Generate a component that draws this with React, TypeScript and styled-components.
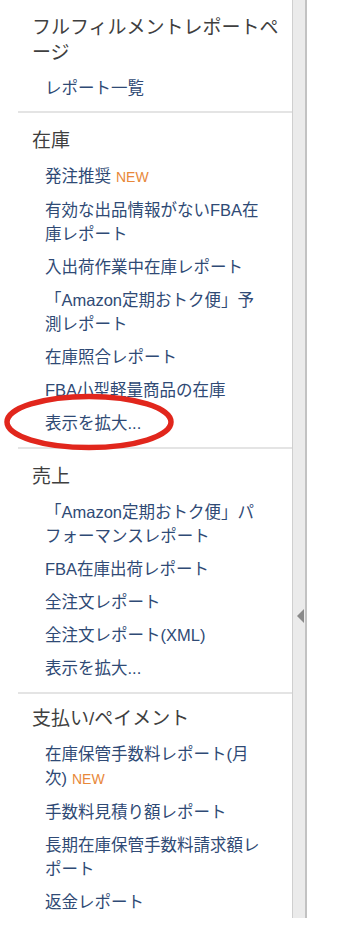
import styled, { createGlobalStyle } from "styled-components"

const GlobalStyle = createGlobalStyle`
  html, body {
    margin: 0;
    padding: 0;
    background: #fff;
  }
  body {
    font-family: "Liberation Sans", "Noto Sans CJK JP", sans-serif;
  }
`

type Link = { label: string, isNew?: boolean }
type Section = { title: string, links: Link[] }

const sections: Section[] = [
  { title: "フルフィルメントレポートページ", links: [{ label: "レポート一覧" }] },
  {
    title: "在庫",
    links: [
      { label: "発注推奨", isNew: true },
      { label: "有効な出品情報がないFBA在庫レポート" },
      { label: "入出荷作業中在庫レポート" },
      { label: "「Amazon定期おトク便」予測レポート" },
      { label: "在庫照合レポート" },
      { label: "FBA小型軽量商品の在庫" },
      { label: "表示を拡大..." },
    ],
  },
  {
    title: "売上",
    links: [
      { label: "「Amazon定期おトク便」パフォーマンスレポート" },
      { label: "FBA在庫出荷レポート" },
      { label: "全注文レポート" },
      { label: "全注文レポート(XML)" },
      { label: "表示を拡大..." },
    ],
  },
  {
    title: "支払い/ペイメント",
    links: [
      { label: "在庫保管手数料レポート(月次)", isNew: true },
      { label: "手数料見積り額レポート" },
      { label: "長期在庫保管手数料請求額レポート" },
      { label: "返金レポート" },
    ],
  },
]

const App = () => {
  return <Page>
    <GlobalStyle />
    <Sidebar>
      {sections.map(section => (
        <Group key={section.title}>
          <Heading>{section.title}</Heading>
          <LinkList>
            {section.links.map((link, i) => (
              <LinkItem key={i}>
                <a href="#report">{link.label}{link.isNew && <NewBadge>NEW</NewBadge>}</a>
              </LinkItem>
            ))}
          </LinkList>
        </Group>
      ))}
    </Sidebar>
    <CollapseHandle>
      <Arrow />
    </CollapseHandle>
    <Annotation width="172" height="60" viewBox="0 0 172 60">
      <ellipse cx="86" cy="30" rx="82" ry="25.5" fill="none" stroke="#e1261c" strokeWidth="5.5" />
    </Annotation>
  </Page>
}

const Page = styled.div`
  position: relative;
  display: flex;
  align-items: flex-start;
  width: 344px;
`

const Sidebar = styled.div`
  width: 274px;
  height: 918px;
  padding-left: 18px;
  display: flex;
  flex-direction: column;
`

const Group = styled.div`
  padding: 15px 0 12px 14px;
  border-bottom: 2px solid #e4e4e4;

  &:first-child {
    padding-bottom: 11px;
  }

  &:last-child {
    padding-top: 12px;
    border-bottom: none;
  }
`

const Heading = styled.div`
  width: 255px;
  font-size: 19px;
  line-height: 25px;
  color: #3f3f3f;
  margin-bottom: 11px;
`

const LinkList = styled.ul`
  list-style: none;
  margin: 0;
  padding: 0 0 0 13px;
  display: flex;
  flex-direction: column;
  gap: 9px;
`

const LinkItem = styled.li`
  width: 217px;
  font-size: 16.5px;
  line-height: 24px;

  a {
    color: #2f4a75;
    text-decoration: none;
  }
`

const NewBadge = styled.span`
  margin-left: 5px;
  font-size: 14px;
  color: #e8883a;
`

const CollapseHandle = styled.div`
  width: 15px;
  height: 918px;
  background: #ebebeb;
  border-left: 1px solid #cfcfcf;
  border-right: 2px solid #c2c2c2;
  display: flex;
  flex-direction: column;
  align-items: flex-end;
  padding-top: 609px;
  box-sizing: border-box;
`

const Arrow = styled.div`
  width: 0;
  height: 0;
  margin-right: 1px;
  border-top: 7px solid transparent;
  border-bottom: 7px solid transparent;
  border-right: 7px solid #8a8a8a;
`

const Annotation = styled.svg`
  position: absolute;
  left: 3px;
  top: 392px;
  pointer-events: none;
`

export default App
